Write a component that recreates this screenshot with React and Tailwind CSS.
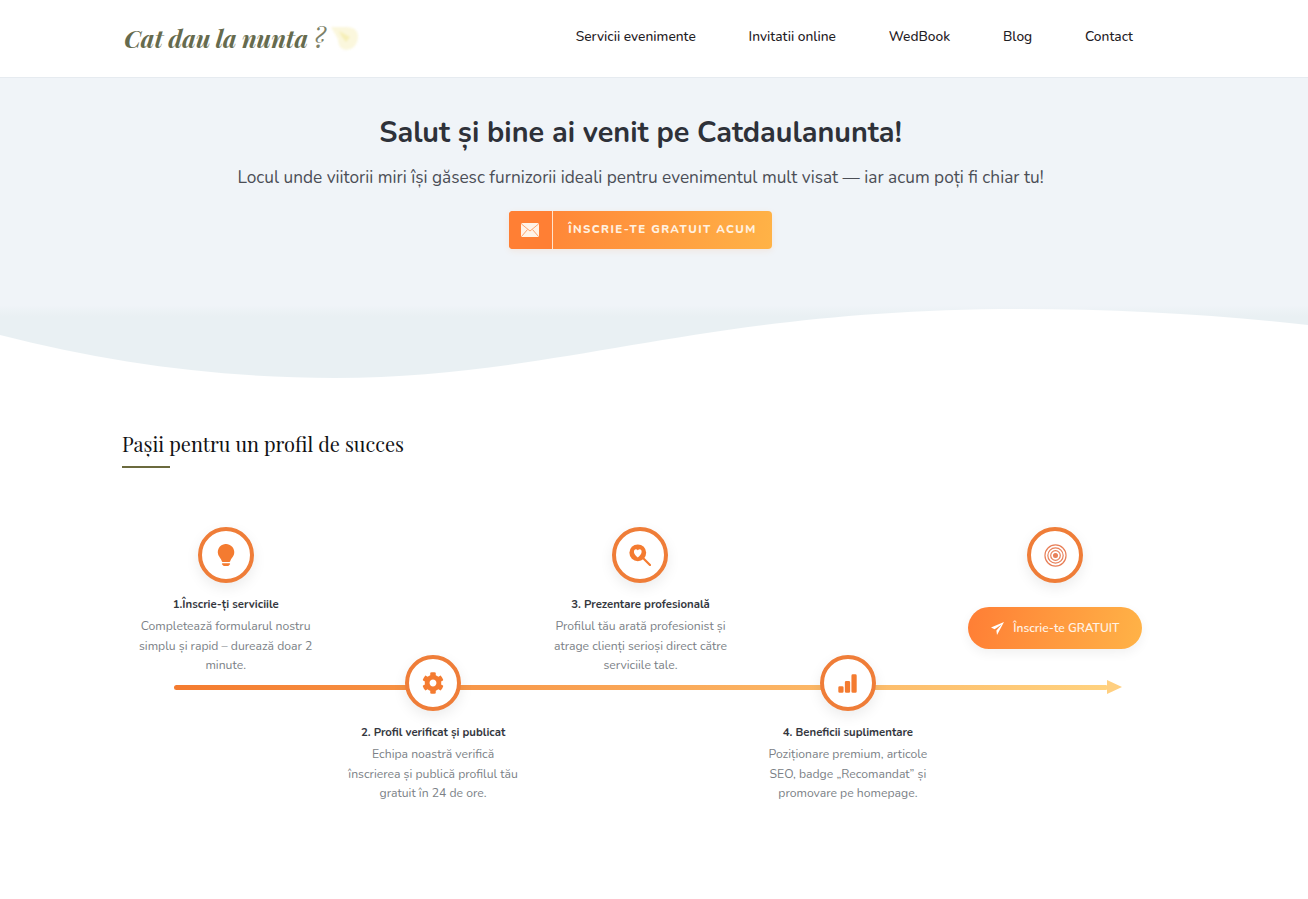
import React from "react";
import { FaCog } from "react-icons/fa";
import { BsBarChartFill, BsLightbulbFill } from "react-icons/bs";

const F = "font-['Nunito','Lato','Open_Sans','Noto_Sans',sans-serif]";
const S = "font-['Playfair_Display','Liberation_Serif',serif]";

function SearchHeart() {
  return (
    <svg viewBox="0 0 22 22" className="w-[22px] h-[22px]">
      <circle cx="8.8" cy="8.8" r="8.4" fill="#f47b30" />
      <path d="M14.5 14.5 L21 21" stroke="#f47b30" strokeWidth="2.2" strokeLinecap="round" />
      <path d="M8.8 13.4 C3.4 9.6 4.6 5 7 5.2 C8 5.3 8.8 6.3 8.8 6.3 C8.8 6.3 9.6 5.3 10.6 5.2 C13 5 14.2 9.6 8.8 13.4Z" fill="#ffffff" />
    </svg>
  );
}

function Target() {
  return (
    <svg viewBox="0 0 24 24" className="w-[23px] h-[23px]" fill="none" stroke="#e8805a" strokeWidth="1.25">
      <circle cx="12" cy="12" r="11" />
      <circle cx="12" cy="12" r="8" />
      <circle cx="12" cy="12" r="5" />
      <circle cx="12" cy="12" r="2" fill="#e8805a" />
    </svg>
  );
}

function Circle({ children }) {
  return (
    <div className="relative z-10 w-14 h-14 rounded-full border-4 border-[#ef7d38] bg-white flex items-center justify-center shadow-[0_5px_14px_rgba(0,0,0,0.08)]">
      {children}
    </div>
  );
}

function Step({ icon, title, desc, low }) {
  return (
    <div className={`flex flex-col items-center text-center ${low ? "pt-[128px]" : ""}`}>
      <Circle>{icon}</Circle>
      <h3 className="mt-[13px] text-[11.4px] leading-[16px] font-bold text-[#34373e] whitespace-nowrap">{title}</h3>
      <p className="mt-[5px] w-[175px] text-[12.2px] leading-[19.5px] text-[#7b7f86]">
        {desc}
      </p>
    </div>
  );
}

export default function App() {
  return (
    <div className={`${F} bg-white min-h-[899px] w-full overflow-hidden`}>
      <header className="h-[78px] border-b border-[#e6ebf0] bg-white flex items-center pl-[124px] pr-[175px] justify-between">
        <div className="flex items-center gap-[5px] pb-[4px]">
          <span className={`${S} italic font-bold text-[24.4px] [word-spacing:-1px] text-[#666b4e] whitespace-nowrap`}>
            Cat dau la nunta <span className="font-normal text-[28px] text-[#7d8168]">?</span>
          </span>
          <svg viewBox="0 0 28 28" className="w-[28px] h-[28px] blur-[0.8px]">
            <path d="M0 4 L13 4 Q27 3 27 14 Q26 26 15 27 Q7 26 7 16Z" fill="#fbf7dd" />
            <path d="M8 8 L19 14 L15 19 L11 14Z" fill="#f6efb8" />
          </svg>
        </div>
        <nav className="flex items-center gap-[52.8px] pb-[2px] text-[13.76px] font-medium text-[#1f2024]">
          <a>Servicii evenimente</a>
          <a>Invitatii online</a>
          <a>WedBook</a>
          <a>Blog</a>
          <a>Contact</a>
        </nav>
      </header>

      <section className="bg-[#f0f4f8] h-[228px] pt-[36px] pr-[27px] flex flex-col items-center">
        <h1 className="text-[28.8px] leading-[38px] font-bold text-[#2e3139]">Salut și bine ai venit pe Catdaulanunta!</h1>
        <p className="mt-[14px] text-[17.25px] leading-[24px] text-[#4b4e56]">
          Locul unde viitorii miri își găsesc furnizorii ideali pentru evenimentul mult visat — iar acum poți fi chiar tu!
        </p>
        <a className="mt-[21px] flex h-[38px] w-[263px] rounded-[4px] overflow-hidden bg-[linear-gradient(100deg,#ff7e35,#ffb347)] shadow-[0_2px_6px_rgba(255,140,60,0.12)]">
          <span className="w-[44px] flex items-center justify-center pr-[2px] border-r border-[#ffe3cc] bg-[#ff7f34]">
            <svg viewBox="0 0 18 14" className="w-[18px] h-[14px]">
              <rect x="0" y="0" width="18" height="14" rx="1.5" fill="#fff3e8" />
              <path d="M0.5 1 L9 8 L17.5 1 M0.5 13.5 L6.5 6.5 M17.5 13.5 L11.5 6.5" fill="none" stroke="#ff9a5e" strokeWidth="0.9" />
            </svg>
          </span>
          <span className="flex-1 flex items-center justify-center text-[11.5px] font-extrabold tracking-[1.4px] text-[#fff1e0] whitespace-nowrap">
            ÎNSCRIE-TE GRATUIT ACUM
          </span>
        </a>
      </section>

      <svg viewBox="0 0 1308 73" className="block w-full h-[73px] -mt-[1px]" preserveAspectRatio="none">
        <defs>
          <linearGradient id="waveFill" x1="0" y1="0" x2="0" y2="1">
            <stop offset="0" stopColor="#f0f4f8" />
            <stop offset="0.16" stopColor="#e9f0f3" />
          </linearGradient>
        </defs>
        <path d="M0 0 L1308 0 L1308 20 C1220 10 1120 4 1020 4 C 700 4 560 73 335 73 C 220 73 110 58 0 30 Z" fill="url(#waveFill)" />
      </svg>

      <main className="w-[1037px] ml-[122px]">
        <div className="pt-[52px]">
          <h2 className={`${S} text-[20px] leading-[28px] text-[#111214]`}>Pașii pentru un profil de succes</h2>
          <div className="mt-[8px] w-[48px] h-[2px] bg-[#6b6a3e]" />
        </div>

        <div className="relative mt-[59px] grid grid-cols-5">
          <div className="absolute left-[52px] top-[158px] w-[934px] h-[5px] rounded-full bg-[linear-gradient(90deg,#f47b2f,#ffd27f)]" />
          <div className="absolute left-[985px] top-[153px] w-0 h-0 border-y-[7.5px] border-y-transparent border-l-[15px] border-l-[#ffcf80]" />
          <Step
            icon={<BsLightbulbFill className="w-[22px] h-[22px] text-[#f47b30]" />}
            title="1.Înscrie-ți serviciile"
            desc="Completează formularul nostru simplu și rapid – durează doar 2 minute."
          />
          <Step
            low
            icon={<FaCog className="w-[22px] h-[22px] text-[#f47b30]" />}
            title="2. Profil verificat și publicat"
            desc="Echipa noastră verifică înscrierea și publică profilul tău gratuit în 24 de ore."
          />
          <Step
            icon={<SearchHeart />}
            title="3. Prezentare profesională"
            desc="Profilul tău arată profesionist și atrage clienți serioși direct către serviciile tale."
          />
          <Step
            low
            icon={<BsBarChartFill className="w-[21px] h-[21px] text-[#f47b30]" />}
            title="4. Beneficii suplimentare"
            desc="Poziționare premium, articole SEO, badge „Recomandat” și promovare pe homepage."
          />
          <div className="flex flex-col items-center">
            <Circle><Target /></Circle>
            <a className="relative z-10 mt-[24px] flex items-center justify-center gap-[9px] w-[174px] h-[42px] rounded-full bg-[linear-gradient(100deg,#ff7e35,#ffb347)] text-[12px] font-semibold text-[#fff3e6] shadow-[0_4px_12px_rgba(0,0,0,0.06)] whitespace-nowrap">
              <svg viewBox="0 0 13 13" className="w-[13px] h-[13px]">
                <path d="M13 0 L0 5.4 L3.6 7.2 L10.6 2.6 L5.4 8.6 L6 13 Z" fill="#ffffff" />
              </svg>
              Înscrie-te GRATUIT
            </a>
          </div>
        </div>
      </main>
    </div>
  );
}
